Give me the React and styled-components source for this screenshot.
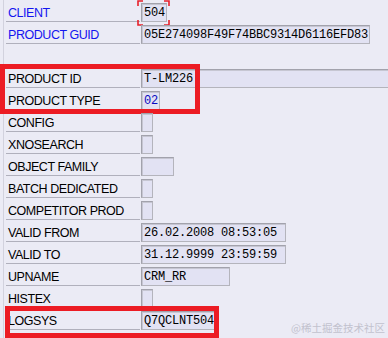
import React from 'react';
import styled, { createGlobalStyle } from 'styled-components';

const Global = createGlobalStyle`
  html, body { margin: 0; padding: 0; background: #ebebf5; }
  body { width: 388px; height: 338px; overflow: hidden; }
`;

const Screen = styled.div`
  position: relative;
  width: 388px;
  height: 338px;
  overflow: hidden;
  background: #ebebf5;
  font-family: "Liberation Sans", Arial, sans-serif;
`;

const Form = styled.div`
  margin-left: 3px;
  border-left: 1px solid #d2d2de;
  min-height: 338px;
  display: flex;
  flex-direction: column;
`;

const Row = styled.div`
  display: flex;
  height: 22px;
  flex: none;
`;

const Label = styled.div`
  box-sizing: border-box;
  flex: none;
  width: 134px;
  margin-left: 2px;
  height: 22px;
  padding: 5px 0 0 2px;
  line-height: 16px;
  font-size: 12.5px;
  letter-spacing: -0.45px;
  white-space: nowrap;
  color: ${p => (p.$blue ? '#1414f0' : '#000')};
  border-bottom: ${p => (p.$empty ? 'none' : '1px solid #b0b0bc')};
`;

const FieldCell = styled.div`
  flex: none;
  padding: 3px 0 0 1px;
  display: flex;
`;

const Field = styled.div`
  position: relative;
  box-sizing: border-box;
  flex: none;
  width: ${p => p.$chars * 7 + 5}px;
  height: 19px;
  border: 1px solid #a2a2ac;
  border-right-color: #b4b4bc;
  border-bottom-color: #b4b4bc;
  box-shadow: inset 1px 1px 0 #c6c6d2;
  background: #e2e2f3;
  padding: 1px 0 0 2px;
  font-family: "Liberation Mono", "Courier New", monospace;
  font-size: 12px;
  letter-spacing: -0.2px;
  line-height: 16px;
  white-space: nowrap;
  color: ${p => (p.$blue ? '#0a0ac0' : '#000')};
`;

const FocusMark = styled.svg`
  position: absolute;
  left: -5px;
  top: -4px;
  width: 33px;
  height: 26px;
  pointer-events: none;
`;

const Group = styled.div`
  position: relative;
  display: flex;
  flex-direction: column;
`;

const Highlight = styled.div`
  position: absolute;
  box-sizing: border-box;
  left: ${p => p.$left}px;
  top: ${p => p.$top}px;
  width: ${p => p.$w}px;
  height: ${p => p.$h}px;
  border: 5px solid #ec1c24;
  pointer-events: none;
`;

const Watermark = styled.div`
  position: absolute;
  right: 3px;
  bottom: 3px;
  font-family: "Noto Sans CJK SC", "Liberation Sans", sans-serif;
  font-size: 10.5px;
  line-height: 14px;
  color: #c2c2ce;
`;

const FormRow = ({ label, value = '', chars, blue, valueBlue, focus }) => (
  <Row>
    <Label $blue={blue}>{label}</Label>
    <FieldCell>
      <Field $chars={chars} $blue={valueBlue}>
        {value}
        {focus && (
          <FocusMark viewBox="0 0 33 26">
            <g fill="none" stroke="#e8202a" strokeWidth="1.6">
              <path d="M1 6 V1 H6" />
              <path d="M27 1 H32 V6" />
              <path d="M1 20 V25 H6" />
              <path d="M27 25 H32 V20" />
            </g>
          </FocusMark>
        )}
      </Field>
    </FieldCell>
  </Row>
);

const EmptyRow = () => (
  <Row>
    <Label $empty />
  </Row>
);

export default function App() {
  return (
    <Screen>
      <Global />
      <Form>
        <FormRow label="CLIENT" value="504" chars={3} blue focus />
        <FormRow label="PRODUCT GUID" value="05E274098F49F74BBC9314D6116EFD83" chars={32} blue />
        <EmptyRow />
        <Group>
          <FormRow label="PRODUCT ID" value="T-LM226" chars={40} />
          <FormRow label="PRODUCT TYPE" value="02" chars={2} valueBlue />
          <Highlight $left={-4} $top={-2} $w={200} $h={50} />
        </Group>
        <FormRow label="CONFIG" chars={1} />
        <FormRow label="XNOSEARCH" chars={1} />
        <FormRow label="OBJECT FAMILY" chars={4} />
        <FormRow label="BATCH DEDICATED" chars={1} />
        <FormRow label="COMPETITOR PROD" chars={1} />
        <FormRow label="VALID FROM" value="26.02.2008 08:53:05" chars={20} />
        <FormRow label="VALID TO" value="31.12.9999 23:59:59" chars={20} />
        <FormRow label="UPNAME" value="CRM_RR" chars={12} />
        <FormRow label="HISTEX" chars={1} />
        <Group>
          <FormRow label="LOGSYS" value="Q7QCLNT504" chars={10} />
          <Highlight $left={1} $top={-2} $w={214} $h={32} />
        </Group>
      </Form>
      <Watermark>@稀土掘金技术社区</Watermark>
    </Screen>
  );
}
